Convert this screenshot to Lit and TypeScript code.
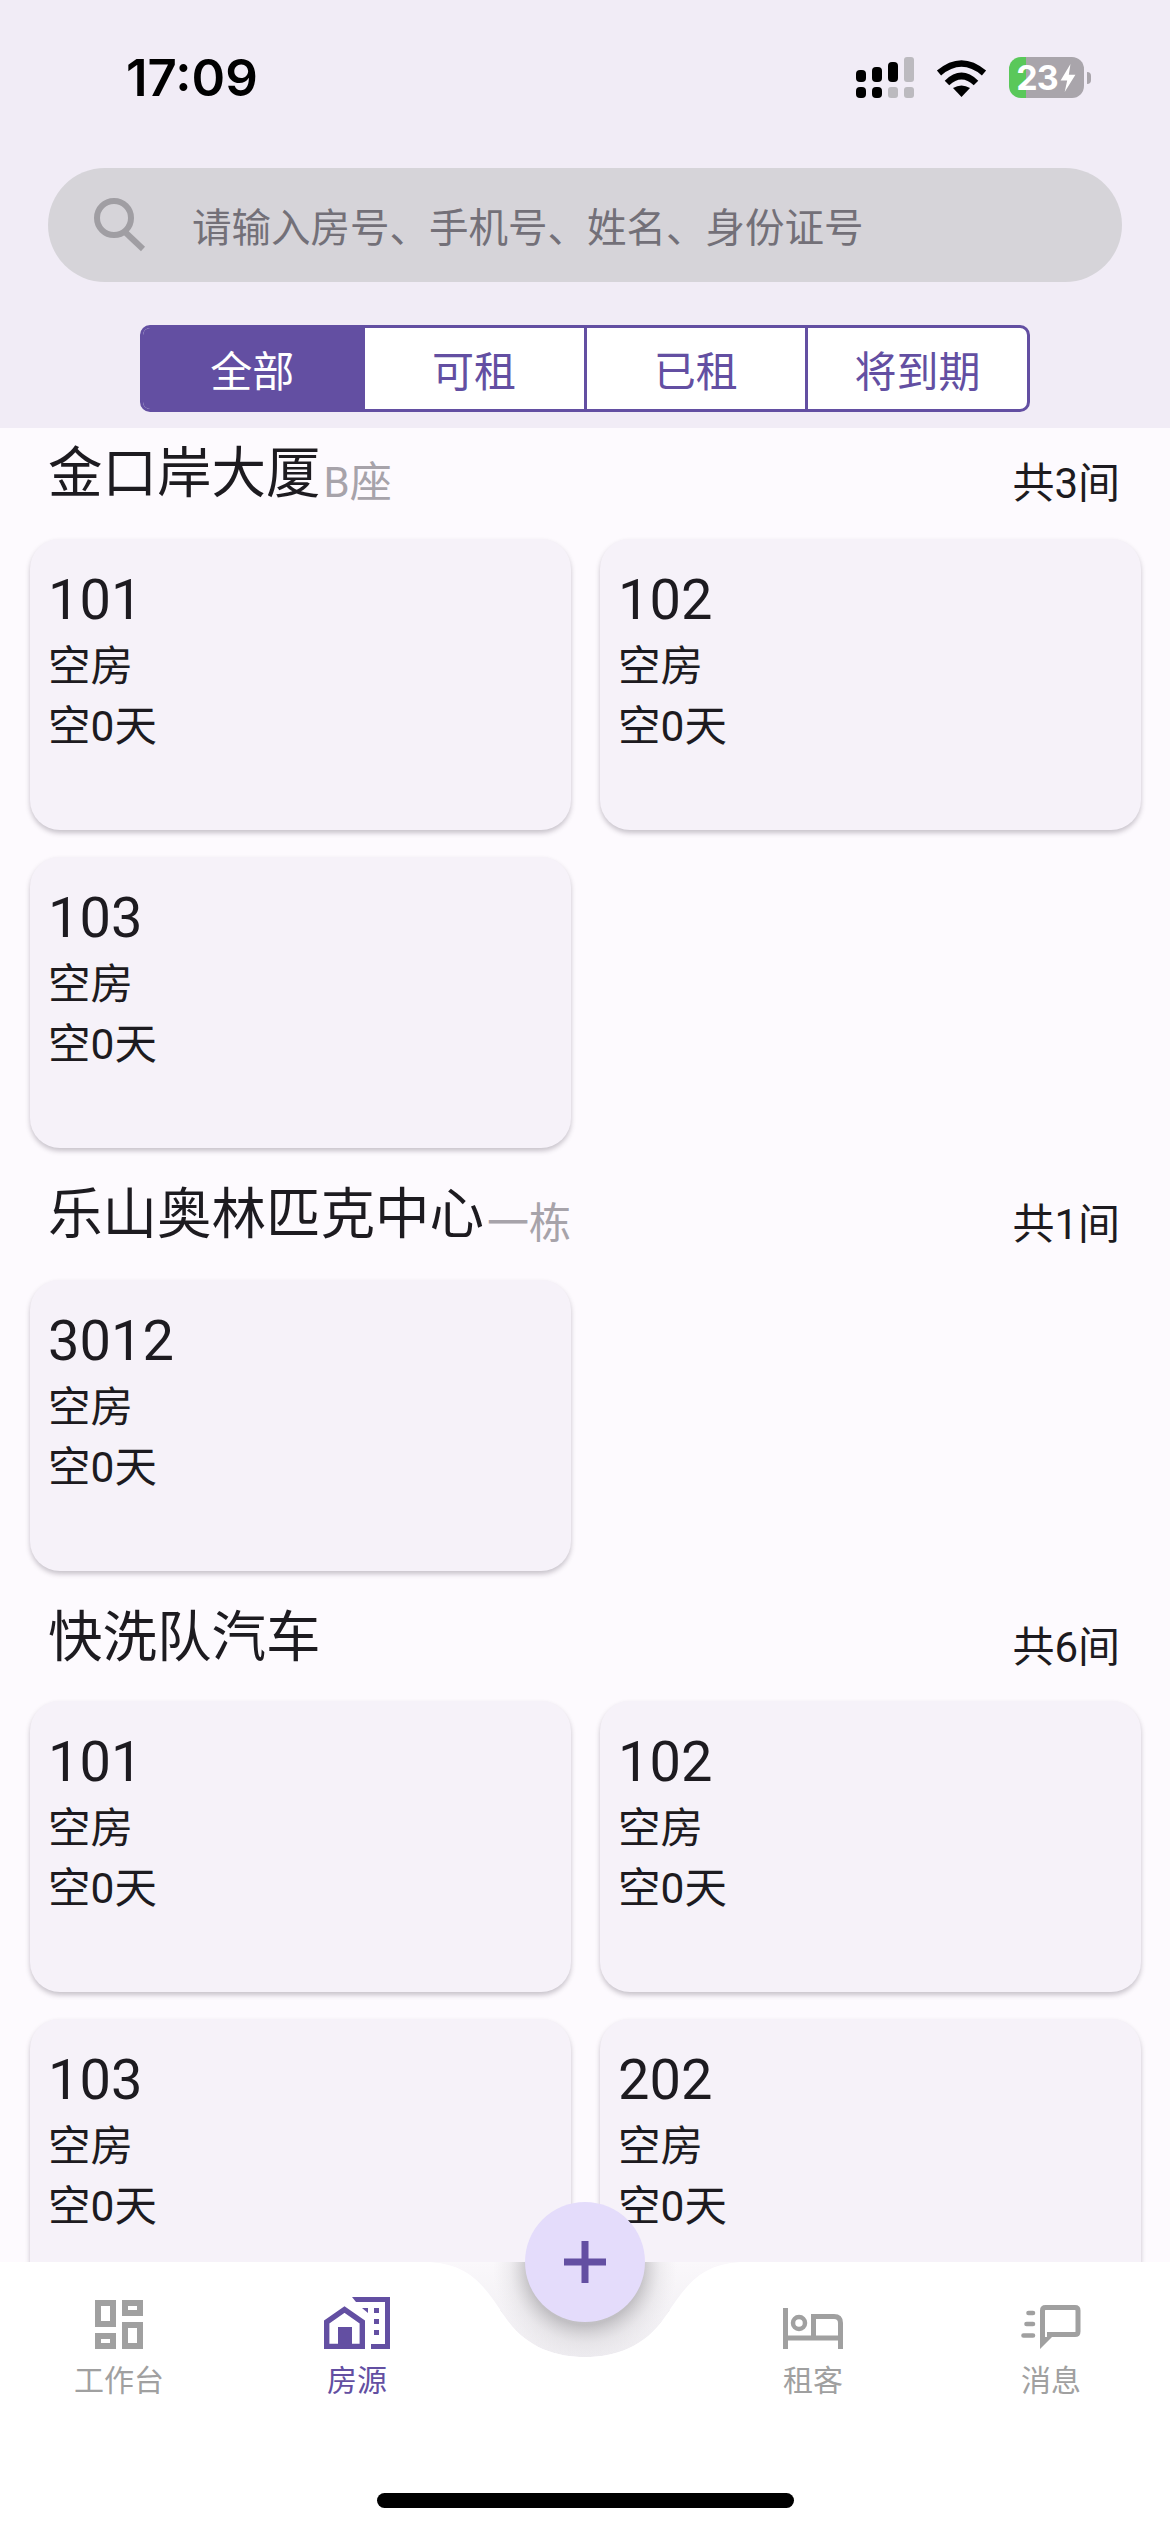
import { LitElement, html, css, svg } from "lit";
import { customElement } from "lit/decorators.js";

interface Section { name: string; sub: string; total: string; rooms: string[]; }

const SECTIONS: Section[] = [
  { name: "金口岸大厦", sub: "B座", total: "共3间", rooms: ["101", "102", "103"] },
  { name: "乐山奥林匹克中心", sub: "一栋", total: "共1间", rooms: ["3012"] },
  { name: "快洗队汽车", sub: "", total: "共6间", rooms: ["101", "102", "103", "202"] },
];

const TABS = ["全部", "可租", "已租", "将到期"];

const signal = svg`
  <svg class="signal" width="58" height="41" viewBox="0 0 58 41">
    <rect x="0" y="13" width="10" height="12" rx="4" fill="#000"/>
    <rect x="16" y="10" width="10" height="15" rx="4" fill="#000"/>
    <rect x="32" y="5" width="10" height="20" rx="4" fill="#000"/>
    <rect x="48" y="0" width="10" height="25" rx="3" fill="#bcbabf"/>
    <rect x="0" y="30" width="10" height="11" rx="4" fill="#000"/>
    <rect x="16" y="30" width="10" height="11" rx="4" fill="#000"/>
    <rect x="32" y="30" width="10" height="11" rx="3" fill="#bcbabf"/>
    <rect x="48" y="30" width="10" height="11" rx="3" fill="#bcbabf"/>
  </svg>`;

const wifi = svg`
  <svg class="wifi" width="51" height="37" viewBox="0 0 51 37">
    <path d="M3 13 Q25.5 -6 48 13" fill="none" stroke="#000" stroke-width="6.5"/>
    <path d="M11 23 Q25.5 9 40 23" fill="none" stroke="#000" stroke-width="6.5"/>
    <path d="M17 28 Q25.5 23 34 28 L25.5 37 Z" fill="#000"/>
  </svg>`;

const bolt = svg`
  <svg width="18" height="28" viewBox="0 0 20 34"><path d="M13 0 L1 20 H9 L6 34 L19 13 H11 Z" fill="#fff"/></svg>`;

const searchIcon = svg`
  <svg class="search-icon" width="54" height="54" viewBox="0 0 54 54">
    <circle cx="21" cy="20" r="17" fill="none" stroke="#a09ea3" stroke-width="6"/>
    <path d="M32 34 L50 51" fill="none" stroke="#a09ea3" stroke-width="6"/>
  </svg>`;

const gridIcon = svg`
  <svg width="50" height="50" viewBox="0 0 50 50" fill="none" stroke="#a0a0a0" stroke-width="6">
    <rect x="4" y="4" width="15" height="21"/>
    <rect x="4" y="37" width="15" height="10"/>
    <rect x="31" y="4" width="15" height="10"/>
    <rect x="31" y="26" width="15" height="21"/>
  </svg>`;

const buildingIcon = svg`
  <svg width="66" height="52" viewBox="0 0 66 52" fill="#634fa2">
    <path d="M28 0 H66 V52 H47 V47 H61 V5 H32 Z"/>
    <path d="M38 11 H44 V16 Z"/>
    <rect x="50" y="11" width="5" height="5"/>
    <rect x="50" y="22" width="5" height="5"/>
    <rect x="50" y="33" width="5" height="5"/>
    <path d="M2.7 49.5 V25 L20.5 12.5 L38.3 25 V49.5 Z" fill="none" stroke="#634fa2" stroke-width="5.4"/>
    <rect x="14" y="30" width="14" height="18"/>
  </svg>`;

const bedIcon = svg`
  <svg width="60" height="41" viewBox="0 0 60 41" fill="none" stroke="#a0a0a0" stroke-width="5">
    <path d="M2.5 0 V41"/>
    <path d="M2.5 30 H57.5"/>
    <path d="M57.5 41 V15 Q57.5 8.5 51 8.5 H30.5 V30"/>
    <circle cx="16" cy="15" r="6" stroke-width="4.5"/>
  </svg>`;

const msgIcon = svg`
  <svg width="60" height="44" viewBox="0 0 60 44" fill="none" stroke="#a0a0a0" stroke-width="5">
    <path d="M21.5 32 V5.5 Q21.5 2.5 24.5 2.5 H54 Q57 2.5 57 5.5 V26.5 Q57 29.5 54 29.5 H26"/>
    <path d="M19 29 V44 L31 32 H22 Z" fill="#a0a0a0" stroke="none"/>
    <path d="M7.5 8 H12 M5.5 19 H12 M2.5 30.5 H12" stroke-linecap="round" stroke-width="4.6"/>
  </svg>`;

const NAV_LEFT = [
  { label: "工作台", icon: gridIcon, active: false },
  { label: "房源", icon: buildingIcon, active: true },
];
const NAV_RIGHT = [
  { label: "租客", icon: bedIcon, active: false },
  { label: "消息", icon: msgIcon, active: false },
];

const NOTCH = "C470 0 485 25 505 55 C525 85 555 95 585 95 C615 95 645 85 665 55 C685 25 700 0 745 0";

@customElement("app-root")
export class AppRoot extends LitElement {
  static styles = css`
    :host {
      display: block;
      position: relative;
      width: 1170px;
      height: 2532px;
      overflow: hidden;
      background: #fdfafe;
      color: #1d1b20;
      font-family: Roboto, "Noto Sans CJK SC", sans-serif;
    }
    .header {
      height: 428px;
      box-sizing: border-box;
      background: #f1ecf6;
      display: flex;
      flex-direction: column;
    }
    .status {
      height: 168px;
      box-sizing: border-box;
      padding: 57px 79px 0 126px;
      display: flex;
      justify-content: space-between;
      align-items: flex-start;
    }
    .time {
      font-family: Inter, sans-serif;
      font-weight: 600;
      font-size: 51px;
      line-height: 42px;
      letter-spacing: 0;
      color: #000;
    }
    .status-right { display: flex; align-items: flex-start; }
    .signal { display: block; }
    .wifi { display: block; margin: 3px 0 0 22px; }
    .battery {
      margin-left: 22px;
      width: 75px;
      height: 41px;
      border-radius: 12px;
      background: linear-gradient(to right, #5ac85a 17px, #a9a5ab 17px);
      display: flex;
      align-items: center;
      justify-content: center;
      gap: 1px;
      color: #fff;
      font-family: Inter, sans-serif;
      font-weight: 700;
      font-size: 34px;
      letter-spacing: -1px;
      line-height: 41px;
    }
    .battery svg { display: block; }
    .nub {
      width: 4px;
      height: 12px;
      margin: 15px 0 0 3px;
      background: #a9a5ab;
      border-radius: 0 6px 6px 0;
    }
    .search {
      height: 114px;
      margin: 0 48px;
      padding: 0 0 2px 44px;
      box-sizing: border-box;
      border-radius: 57px;
      background: #d6d4d9;
      display: flex;
      align-items: center;
      gap: 46px;
      font-size: 39.5px;
      color: #737078;
    }
    .search-icon { display: block; flex: none; margin: 2px -1px 0 1px; }
    .tabs {
      margin: 43px auto 0;
      width: 890px;
      height: 87px;
      box-sizing: border-box;
      display: flex;
      border: 3px solid #634fa2;
      border-radius: 10px;
      overflow: hidden;
      background: #fff;
    }
    .tab {
      flex: 1;
      display: flex;
      align-items: center;
      justify-content: center;
      font-size: 42px;
      color: #634fa2;
      border-left: 3px solid #634fa2;
    }
    .tab:first-child { border-left: none; }
    .tab.on { background: #634fa2; color: #fff; }
    .list { padding-top: 6px; }
    .head {
      height: 105px;
      box-sizing: border-box;
      padding: 1px 50px 0 48px;
      display: flex;
      align-items: flex-start;
    }
    .head.plain { height: 103px; }
    .title { font-size: 54.5px; line-height: 76px; }
    .sub { font-size: 42px; line-height: 76px; color: #a7a3aa; margin: 10px 0 0 3px; height: 70px; }
    .total { margin: 11px 0 0 auto; font-size: 42px; line-height: 76px; }
    .grid {
      display: grid;
      grid-template-columns: 541px 541px;
      column-gap: 29px;
      row-gap: 27px;
      padding: 0 29px 27px 30px;
    }
    .card {
      height: 291px;
      box-sizing: border-box;
      padding: 26px 18px 0 18px;
      border-radius: 30px;
      background: #f6f2f9;
      box-shadow: 0 3px 5px rgba(60, 50, 70, 0.28);
    }
    .num { font-size: 56px; line-height: 70px; }
    .line { font-size: 42.5px; line-height: 60px; }
    .num + .line { margin-top: 2px; }
    .nav {
      position: absolute;
      left: 0;
      right: 0;
      bottom: 0;
      height: 270px;
    }
    .nav-bg {
      position: absolute;
      left: 0;
      top: 0;
      display: block;
    }
    .nav-row {
      position: relative;
      display: flex;
      height: 160px;
    }
    .spacer { flex: 1; }
    .item {
      width: 238px;
      display: flex;
      flex-direction: column;
      align-items: center;
      font-size: 30px;
      line-height: 36px;
      color: #a0a0a0;
    }
    .item.on { color: #634fa2; }
    .icon {
      height: 87px;
      display: flex;
      align-items: flex-end;
      margin-bottom: 14px;
    }
    .icon svg { display: block; }
    .fab {
      position: absolute;
      left: 525px;
      top: -60px;
      width: 120px;
      height: 120px;
      border-radius: 50%;
      background: #e4dcfb;
      display: flex;
      align-items: center;
      justify-content: center;
    }
    .fab svg { display: block; }
    .home {
      position: absolute;
      left: 377px;
      top: 231px;
      width: 417px;
      height: 15px;
      border-radius: 8px;
      background: #000;
    }
  `;

  render() {
    return html`
      <div class="header">
        <div class="status">
          <div class="time">17:09</div>
          <div class="status-right">
            ${signal}${wifi}
            <div class="battery"><span>23</span>${bolt}</div>
            <div class="nub"></div>
          </div>
        </div>
        <div class="search">${searchIcon}<span>请输入房号、手机号、姓名、身份证号</span></div>
        <div class="tabs">
          ${TABS.map((t, i) => html`<div class="tab ${i === 0 ? "on" : ""}">${t}</div>`)}
        </div>
      </div>
      <div class="list">
        ${SECTIONS.map(
          (s) => html`
            <div class="head ${s.sub ? "" : "plain"}">
              <span class="title">${s.name}</span>
              ${s.sub ? html`<span class="sub">${s.sub}</span>` : ""}
              <span class="total">${s.total}</span>
            </div>
            <div class="grid">
              ${s.rooms.map(
                (r) => html`
                  <div class="card">
                    <div class="num">${r}</div>
                    <div class="line">空房</div>
                    <div class="line">空0天</div>
                  </div>
                `
              )}
            </div>
          `
        )}
      </div>
      <div class="nav">
        <svg class="nav-bg" width="1170" height="270" viewBox="0 0 1170 270">
          <defs>
            <linearGradient id="n" x1="0" y1="0" x2="0" y2="1">
              <stop offset="0" stop-color="#faf8fb"/>
              <stop offset="1" stop-color="#eeecf0"/>
            </linearGradient>
            <radialGradient id="s" gradientUnits="userSpaceOnUse" cx="585" cy="6" r="92">
              <stop offset="0.62" stop-color="#a8a6aa" stop-opacity="0.65"/>
              <stop offset="0.82" stop-color="#c8c6ca" stop-opacity="0.22"/>
              <stop offset="1" stop-color="#d8d6da" stop-opacity="0"/>
            </radialGradient>
          </defs>
          <path d="M425 0 ${NOTCH} Z" fill="url(#n)"/>
          <path d="M425 0 ${NOTCH} Z" fill="url(#s)"/>
          <path d="M0 0 H425 ${NOTCH} H1170 V270 H0 Z" fill="#fff"/>
        </svg>
        <div class="nav-row">
          ${NAV_LEFT.map(
            (n) => html`<div class="item ${n.active ? "on" : ""}"><div class="icon">${n.icon}</div>${n.label}</div>`
          )}
          <div class="spacer"></div>
          ${NAV_RIGHT.map(
            (n) => html`<div class="item"><div class="icon">${n.icon}</div>${n.label}</div>`
          )}
        </div>
        <div class="fab">
          <svg width="42" height="42" viewBox="0 0 42 42"><path d="M0 21 H42 M21 0 V42" stroke="#634fa2" stroke-width="7"/></svg>
        </div>
        <div class="home"></div>
      </div>
    `;
  }
}
